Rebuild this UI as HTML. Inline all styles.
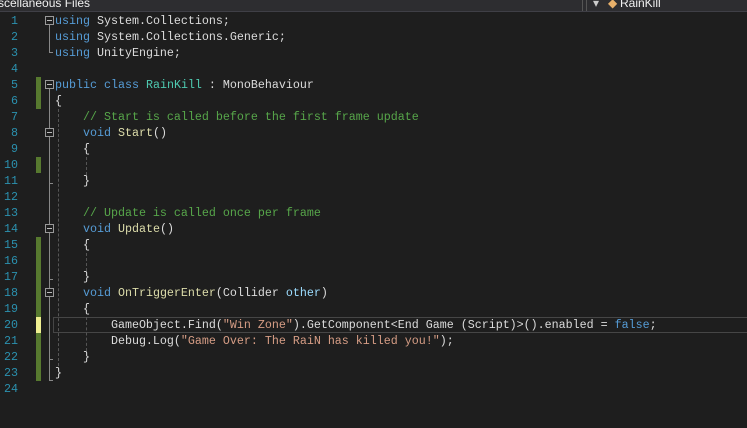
<!DOCTYPE html>
<html><head><style>
body{margin:0;width:747px;height:428px;background:#1e1e1e;overflow:hidden;position:relative;font-family:"Liberation Mono",monospace;font-size:11.67px}
.top{position:absolute;left:0;top:0;width:747px;height:11px;background:#2d2d30;border-bottom:1px solid #3f3f46}
.top span{position:absolute;top:-4px;color:#f1f1f1;font-family:"Liberation Sans",sans-serif;font-size:12px}
.ln{position:absolute;left:0;width:18px;text-align:right;color:#2b91af;height:16px;line-height:16px}
.cd{position:absolute;left:55px;color:#dcdcdc;white-space:pre;height:16px;line-height:16px}
.k{color:#569cd6}.t{color:#4ec9b0}.c{color:#57a64a}.s{color:#d69d85}.m{color:#dcdcaa}.p{color:#9cdcfe}
.g{position:absolute;left:36px;width:5px;background:#57792f}
.f{position:absolute;left:45px;width:7px;height:7px;border:1px solid #999;background:#1e1e1e;z-index:2}
.f i{position:absolute;left:1px;top:3px;width:5px;height:1px;background:#bbb}
.v{position:absolute;left:49px;width:1px;background:#888}
.d{position:absolute;width:0;border-left:1px dashed #555}
</style></head><body>
<div class="top"><span style="left:-2px">scellaneous Files</span><span style="left:593px;color:#ccc">&#9662;</span><span style="left:608px;color:#e8b06a">&#9670;</span><span style="left:620px">RainKill</span></div>
<div style="position:absolute;left:582px;top:0;width:1px;height:11px;background:#555"></div>
<div style="position:absolute;left:586px;top:0;width:1px;height:11px;background:#555"></div>

<div class="g" style="top:77px;height:32px"></div>
<div class="g" style="top:157px;height:16px"></div>
<div class="g" style="top:237px;height:144px"></div>
<div style="position:absolute;left:36px;top:317px;width:5px;height:16px;background:#efef91"></div>

<div style="position:absolute;left:53px;top:317px;width:694px;height:14px;border:1px solid #464646"></div>

<div class="f" style="top:16px"><i></i></div><div class="v" style="top:25px;height:28px"></div><div style="position:absolute;left:49px;top:52px;width:4px;height:1px;background:#888"></div>
<div class="f" style="top:80px"><i></i></div><div class="v" style="top:89px;height:291px"></div><div style="position:absolute;left:49px;top:380px;width:4px;height:1px;background:#888"></div>
<div class="f" style="top:128px"><i></i></div><div style="position:absolute;left:49px;top:183px;width:4px;height:1px;background:#888"></div>
<div class="f" style="top:224px"><i></i></div><div style="position:absolute;left:49px;top:279px;width:4px;height:1px;background:#888"></div>
<div class="f" style="top:288px"><i></i></div><div style="position:absolute;left:49px;top:359px;width:4px;height:1px;background:#888"></div>
<div class="d" style="left:58px;top:109px;height:262px"></div>
<div class="d" style="left:86px;top:157px;height:18px"></div>
<div class="d" style="left:86px;top:253px;height:18px"></div>
<div class="d" style="left:86px;top:317px;height:34px"></div>

<div class="ln" style="top:13px">1</div><div class="cd" style="top:13px"><span class="k">using</span> System.Collections;</div>
<div class="ln" style="top:29px">2</div><div class="cd" style="top:29px"><span class="k">using</span> System.Collections.Generic;</div>
<div class="ln" style="top:45px">3</div><div class="cd" style="top:45px"><span class="k">using</span> UnityEngine;</div>
<div class="ln" style="top:61px">4</div>
<div class="ln" style="top:77px">5</div><div class="cd" style="top:77px"><span class="k">public</span> <span class="k">class</span> <span class="t">RainKill</span> : MonoBehaviour</div>
<div class="ln" style="top:93px">6</div><div class="cd" style="top:93px">{</div>
<div class="ln" style="top:109px">7</div><div class="cd" style="top:109px">    <span class="c">// Start is called before the first frame update</span></div>
<div class="ln" style="top:125px">8</div><div class="cd" style="top:125px">    <span class="k">void</span> <span class="m">Start</span>()</div>
<div class="ln" style="top:141px">9</div><div class="cd" style="top:141px">    {</div>
<div class="ln" style="top:157px">10</div>
<div class="ln" style="top:173px">11</div><div class="cd" style="top:173px">    }</div>
<div class="ln" style="top:189px">12</div>
<div class="ln" style="top:205px">13</div><div class="cd" style="top:205px">    <span class="c">// Update is called once per frame</span></div>
<div class="ln" style="top:221px">14</div><div class="cd" style="top:221px">    <span class="k">void</span> <span class="m">Update</span>()</div>
<div class="ln" style="top:237px">15</div><div class="cd" style="top:237px">    {</div>
<div class="ln" style="top:253px">16</div>
<div class="ln" style="top:269px">17</div><div class="cd" style="top:269px">    }</div>
<div class="ln" style="top:285px">18</div><div class="cd" style="top:285px">    <span class="k">void</span> <span class="m">OnTriggerEnter</span>(Collider <span class="p">other</span>)</div>
<div class="ln" style="top:301px">19</div><div class="cd" style="top:301px">    {</div>
<div class="ln" style="top:317px">20</div><div class="cd" style="top:317px">        GameObject.Find(<span class="s">"Win Zone"</span>).GetComponent&lt;End Game (Script)&gt;().enabled = <span class="k">false</span>;</div>
<div class="ln" style="top:333px">21</div><div class="cd" style="top:333px">        Debug.Log(<span class="s">"Game Over: The RaiN has killed you!"</span>);</div>
<div class="ln" style="top:349px">22</div><div class="cd" style="top:349px">    }</div>
<div class="ln" style="top:365px">23</div><div class="cd" style="top:365px">}</div>
<div class="ln" style="top:381px">24</div>
</body></html>
